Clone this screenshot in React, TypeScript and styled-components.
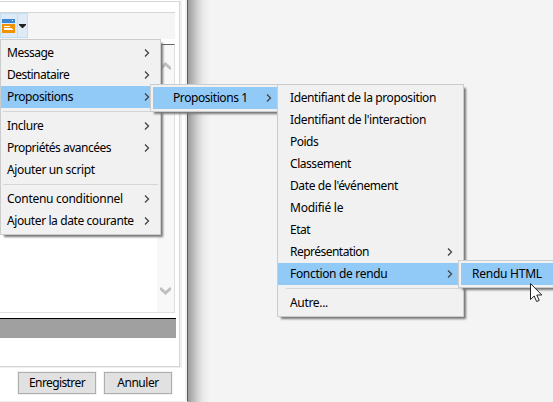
import React from 'react';
import styled, { createGlobalStyle, css } from 'styled-components';

const Global = createGlobalStyle`
  * { box-sizing: border-box; }
  html, body { margin: 0; overflow: hidden; }
  body { font: 12px/22px "Noto Sans", "Open Sans", sans-serif; color: #000; }
`;

const Desktop = styled.main`
  position: relative;
  width: 553px;
  height: 402px;
  overflow: hidden;
  background: #f4f4f4;
`;

const Dialog = styled.section`
  display: flex;
  flex-direction: column;
  width: 188px;
  height: 402px;
  background: #fff;
  border-right: 1px solid #5c5c5c;
  border-bottom: 1px solid #f0f0f0;
  box-shadow: inset -2px 0 #f0f0f0;
`;

const DialogShadow = styled.div`
  position: absolute;
  left: 188px;
  top: 0;
  width: 24px;
  height: 402px;
  background: linear-gradient(90deg, #9b9b9b 0, #b8b8b8 5px, #d4d4d4 10px, #e9e9e9 15px, #f4f4f4 22px);
`;

const Panel = styled.div`
  width: 182px;
  height: 368px;
  border-right: 2px solid #f0f0f0;
  border-bottom: 1px solid #f0f0f0;
`;

const PanelBody = styled.div`
  margin-top: 1px;
  width: 180px;
  height: 366px;
  border: 1px solid #d6d6d6;
  border-left: 0;
  padding-top: 10px;
`;

const Toolbar = styled.div`
  display: flex;
  width: 175px;
  height: 27px;
  border-top: 1px solid #d6d6d6;
  background: #f5f5f5;
`;

const SplitButton = styled.div`
  display: flex;
  width: 28px;
  height: 25px;
  border: 1px solid #c0dff5;
  background: #deebf6;
`;

const ButtonIcon = styled.div`
  width: 17px;
  height: 23px;
  border-right: 1px solid #c0dff5;
  svg { display: block; }
`;

const DropArrow = styled.div`
  width: 9px;
  svg { display: block; }
`;

const Editor = styled.div`
  display: flex;
  justify-content: flex-end;
  margin-top: 5px;
  width: 175px;
  height: 269px;
  border: 1px solid #e0e0e0;
  border-top-color: #646464;
  border-left: 0;
`;

const ScrollTrack = styled.div`
  display: flex;
  flex-direction: column;
  justify-content: space-between;
  width: 17px;
  padding: 17px 3px;
  background: #f8f8f8;
  svg { display: block; }
`;

const StatusBar = styled.div`
  margin-top: 5px;
  width: 176px;
  height: 20px;
  border-top: 1px solid #000;
  background: #a0a0a0;
`;

const Actions = styled.footer`
  display: flex;
  gap: 8px;
  padding: 4px 0 0 18px;
`;

const Button = styled.button<{ $width: number }>`
  width: ${p => p.$width}px;
  height: 22px;
  padding: 0;
  border: 1px solid #adadad;
  background: #e1e1e1;
  box-shadow: 0 0 0 1px #f2f2f2;
  color: #000;
  font: inherit;
  line-height: 20px;
`;

const Menu = styled.ul<{ $x: number; $y: number; $width: number; $indent: number; $arrow: number; $rule?: number }>`
  position: absolute;
  left: ${p => p.$x}px;
  top: ${p => p.$y}px;
  width: ${p => p.$width}px;
  margin: 0;
  padding: 2px 0;
  list-style: none;
  border: 1px solid #ccc;
  background: #f1f1f1;
  box-shadow: 3px 3px 2px -1px #777;
  --indent: ${p => p.$indent}px;
  --arrow: ${p => p.$arrow}px;
  --rule: ${p => p.$rule ?? 2}px;
`;

const Item = styled.li<{ $active?: boolean; $inset?: boolean }>`
  display: flex;
  align-items: center;
  justify-content: space-between;
  height: 22px;
  padding: 0 var(--arrow) 0 var(--indent);
  white-space: nowrap;
  ${p => p.$active && css`background: #91c9f7;`}
  ${p => p.$inset && css`margin: 0 0 0 2px;`}
`;

const Label = styled.span<{ $spacing: number }>`
  letter-spacing: ${p => p.$spacing}px;
`;

const Separator = styled.li`
  height: 7px;
  padding: 3px 2px 0 var(--rule);
  &::before { content: ''; display: block; height: 1px; background: #d5d5d5; }
`;

const Pointer = styled.svg`
  position: absolute;
  left: 530px;
  top: 283px;
`;

const Chevron = () => (
  <svg width="6" height="8" viewBox="0 0 6 8"><path d="M1 .5 4.500 4 1 7.500" fill="none" stroke="#444" strokeWidth="1.300" /></svg>
);

type Entry = { text: string; spacing: number; sub?: boolean; active?: boolean } | null;

const mainMenu: Entry[] = [
  { text: 'Message', spacing: -0.5, sub: true },
  { text: 'Destinataire', spacing: -0.52, sub: true },
  { text: 'Propositions', spacing: -0.38, sub: true, active: true },
  null,
  { text: 'Inclure', spacing: -0.4, sub: true },
  { text: 'Propriétés avancées', spacing: -0.5, sub: true },
  { text: 'Ajouter un script', spacing: -0.36 },
  null,
  { text: 'Contenu conditionnel', spacing: -0.29, sub: true },
  { text: 'Ajouter la date courante', spacing: -0.4, sub: true },
];

const fieldMenu: Entry[] = [
  { text: 'Identifiant de la proposition', spacing: -0.38 },
  { text: "Identifiant de l'interaction", spacing: -0.35 },
  { text: 'Poids', spacing: -0.5 },
  { text: 'Classement', spacing: -0.45 },
  { text: "Date de l'événement", spacing: -0.39 },
  { text: 'Modifié le', spacing: -0.24 },
  { text: 'Etat', spacing: -0.5 },
  { text: 'Représentation', spacing: -0.52, sub: true },
  { text: 'Fonction de rendu', spacing: -0.32, sub: true, active: true },
  null,
  { text: 'Autre...', spacing: -0.32 },
];

const Entries = ({ items, inset }: { items: Entry[]; inset?: boolean }) => (
  <>
    {items.map((e, i) => e ? (
      <Item key={i} $active={e.active} $inset={inset}>
        <Label $spacing={e.spacing}>{e.text}</Label>
        {e.sub && <Chevron />}
      </Item>
    ) : <Separator key={i} />)}
  </>
);

export default function App() {
  return (
    <Desktop>
      <Global />
      <Dialog>
        <Panel>
          <PanelBody>
            <Toolbar>
              <SplitButton>
                <ButtonIcon>
                  <svg width="16" height="23" viewBox="1 0 16 23" shapeRendering="crispEdges">
                    <path fill="#3a86d0" d="M2 5h13v4H2z" />
                    <path fill="#f39200" d="M2 10h13v9H2z" />
                    <path stroke="#fff" d="M4 12.500h6M4 14.500h8M4 15.500h9M12 6.500h1" />
                  </svg>
                </ButtonIcon>
                <DropArrow>
                  <svg width="9" height="23" viewBox="0 0 9 23"><path fill="#222" d="M1 10h7v1L5 14H4L1 11z" /></svg>
                </DropArrow>
              </SplitButton>
            </Toolbar>
            <Editor>
              <ScrollTrack>
                <svg width="11" height="9" viewBox="0 0 11 9"><path d="M0 7 5.500 2 11 7" fill="none" stroke="#bfbfbf" strokeWidth="3" /></svg>
                <svg width="11" height="9" viewBox="0 0 11 9"><path d="M0 2 5.500 7 11 2" fill="none" stroke="#bfbfbf" strokeWidth="3" /></svg>
              </ScrollTrack>
            </Editor>
            <StatusBar />
          </PanelBody>
        </Panel>
        <Actions>
          <Button $width={78}><Label $spacing={-0.6}>Enregistrer</Label></Button>
          <Button $width={68}><Label $spacing={-0.45}>Annuler</Label></Button>
        </Actions>
      </Dialog>
      <DialogShadow />
      <Menu $x={0} $y={39} $width={161} $indent={6} $arrow={10}><Entries items={mainMenu} /></Menu>
      <Menu $x={150} $y={84} $width={130} $indent={20} $arrow={7}>
        <Entries inset items={[{ text: 'Propositions 1', spacing: -0.42, sub: true, active: true }]} />
      </Menu>
      <Menu $x={277} $y={84} $width={187} $indent={12} $arrow={10} $rule={8}><Entries items={fieldMenu} /></Menu>
      <Menu $x={458} $y={260} $width={110} $indent={11} $arrow={0}>
        <Entries inset items={[{ text: 'Rendu HTML', spacing: -0.25, active: true }]} />
      </Menu>
      <Pointer width="13" height="20" viewBox="0 0 13 20">
        <path d="M.5.5v16l3.700-3.500 2.400 5.500 2.600-1.100-2.400-5.400h5z" fill="#fff" stroke="#222" />
      </Pointer>
    </Desktop>
  );
}
